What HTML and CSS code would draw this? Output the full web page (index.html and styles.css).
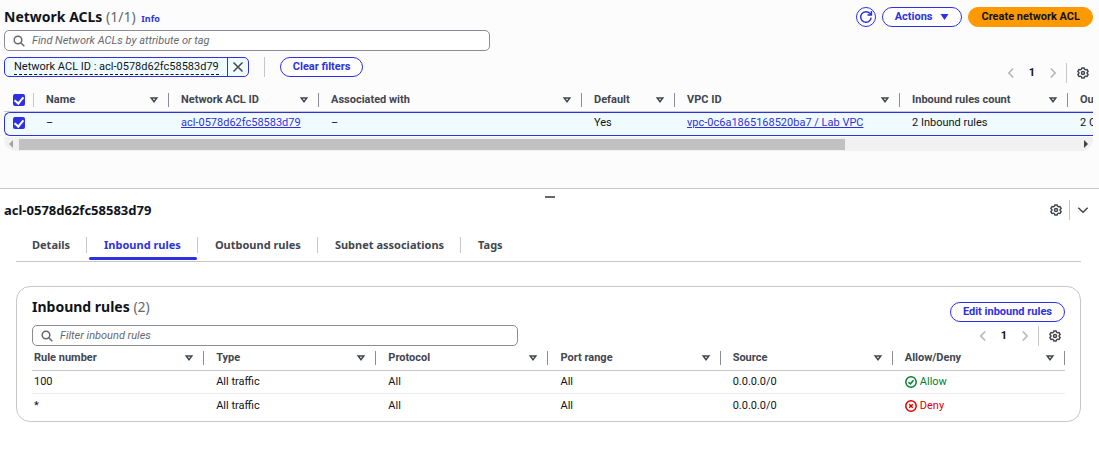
FILE: index.html
```
<!DOCTYPE html>
<html lang="en">
<head>
<meta charset="utf-8">
<title>Network ACLs</title>
<link rel="stylesheet" href="styles.css">
</head>
<body>
<svg class="sprite" aria-hidden="true">
  <symbol id="search" viewBox="0 0 12 12"><circle cx="5" cy="5" r="3.8"/><path d="M7.8 7.8 11.3 11.3"/></symbol>
  <symbol id="sort" viewBox="0 0 10 8"><path d="M2.200 2h5.600L5 5.800z"/></symbol>
  <symbol id="left" viewBox="0 0 12 12"><path d="M8.2 1.5 3.8 6l4.4 4.5"/></symbol>
  <symbol id="right" viewBox="0 0 12 12"><path d="M3.8 1.5 8.2 6l-4.4 4.5"/></symbol>
  <symbol id="gear" viewBox="0 0 12 12"><path d="M4.900 1h2.200l.5 1.300 1 .5 1.400-.3 1.100 2-.9 1v1l.9 1-1.100 2-1.400-.3-1 .5L7.100 11H4.900l-.5-1.300-1-.5-1.400.3-1.100-2 .9-1v-1l-.9-1 1.100-2 1.400.3 1-.5z"/><circle cx="6" cy="6" r="1.500"/></symbol>
</svg>

<main class="list">
  <header class="head">
    <h1 class="title">Network ACLs <span class="count">(1/1)</span> <a class="info" href="#info">Info</a></h1>
    <div class="actions">
      <button class="btn round" aria-label="Refresh"><svg class="refresh" viewBox="0 0 14 14"><path d="M12.200 7.700A5.300 5.300 0 1 1 11 3.500l1.300 1.300M12.400 1v4H8.500"/></svg></button>
      <button class="btn">Actions <svg class="caret" viewBox="0 0 9 8"><path d="M.5 1h8l-4 6z"/></svg></button>
      <button class="btn primary">Create network ACL</button>
    </div>
  </header>
  <div class="toolbar">
    <div class="filters">
      <label class="search"><svg class="icon12"><use href="#search"/></svg><input type="text" aria-label="Find Network ACLs" placeholder="Find Network ACLs by attribute or tag"></label>
      <div class="tokens">
        <div class="token"><button class="token-text"><span>Network ACL ID : acl-0578d62fc58583d79</span></button><button class="token-x" aria-label="Remove filter"><svg class="icon12" viewBox="0 0 12 12"><path d="M1.500 1.500l9 9M10.500 1.500l-9 9"/></svg></button></div>
        <span class="rule"></span>
        <button class="btn">Clear filters</button>
      </div>
    </div>
    <nav class="pager" aria-label="Network ACL pages">
      <button class="ghost dim" aria-label="Previous page"><svg class="icon12"><use href="#left"/></svg></button>
      <button class="ghost page">1</button>
      <button class="ghost dim" aria-label="Next page"><svg class="icon12"><use href="#right"/></svg></button>
      <span class="rule"></span>
      <button class="ghost" aria-label="Preferences"><svg class="icon12"><use href="#gear"/></svg></button>
    </nav>
  </div>
  <div class="scroller">
    <table class="acls">
      <colgroup><col class="c-check"><col class="c-name"><col class="c-id"><col class="c-assoc"><col class="c-default"><col class="c-vpc"><col class="c-in"><col class="c-out"></colgroup>
      <thead><tr>
        <th><div class="cell light"><input class="check" type="checkbox" checked aria-label="Select all"></div></th>
        <th><div class="cell">Name<svg class="sort"><use href="#sort"/></svg></div></th>
        <th><div class="cell">Network ACL ID<svg class="sort"><use href="#sort"/></svg></div></th>
        <th><div class="cell">Associated with<svg class="sort"><use href="#sort"/></svg></div></th>
        <th><div class="cell">Default<svg class="sort"><use href="#sort"/></svg></div></th>
        <th><div class="cell">VPC ID<svg class="sort"><use href="#sort"/></svg></div></th>
        <th><div class="cell">Inbound rules count<svg class="sort"><use href="#sort"/></svg></div></th>
        <th><div class="cell">Outbound rules count</div></th>
      </tr></thead>
      <tbody><tr>
        <td class="pick"><input class="check" type="checkbox" checked aria-label="Select acl-0578d62fc58583d79"></td>
        <td>–</td>
        <td><a href="#acl">acl-0578d62fc58583d79</a></td>
        <td>–</td>
        <td>Yes</td>
        <td><a href="#vpc">vpc-0c6a1865168520ba7 / Lab VPC</a></td>
        <td>2 Inbound rules</td>
        <td>2 Outbound rules</td>
      </tr></tbody>
    </table>
  </div>
  <div class="scrollbar" aria-hidden="true">
    <svg class="arrow off" viewBox="0 0 6 8"><path d="M5 0v8L1 4z"/></svg>
    <div class="track"><div class="thumb"></div></div>
    <svg class="arrow" viewBox="0 0 6 8"><path d="M1 0v8l4-4z"/></svg>
  </div>
</main>

<section class="panel">
  <div class="grip"></div>
  <header class="panel-head">
    <h2 class="panel-title">acl-0578d62fc58583d79</h2>
    <div class="panel-tools">
      <button class="ghost" aria-label="Panel preferences"><svg class="icon12"><use href="#gear"/></svg></button>
      <span class="rule"></span>
      <button class="ghost" aria-label="Collapse panel"><svg class="icon12" viewBox="0 0 12 12"><path d="M1.300 3.800 6 8.300l4.700-4.500"/></svg></button>
    </div>
  </header>
  <div class="tabs" role="tablist">
    <button class="tab" role="tab"><span>Details</span></button>
    <button class="tab active" role="tab" aria-selected="true"><span>Inbound rules</span></button>
    <button class="tab" role="tab"><span>Outbound rules</span></button>
    <button class="tab" role="tab"><span>Subnet associations</span></button>
    <button class="tab" role="tab"><span>Tags</span></button>
  </div>
  <div class="card">
    <header class="card-head">
      <h2 class="title">Inbound rules <span class="count">(2)</span></h2>
      <button class="btn">Edit inbound rules</button>
    </header>
    <div class="card-bar">
      <label class="search"><svg class="icon12"><use href="#search"/></svg><input type="text" aria-label="Filter inbound rules" placeholder="Filter inbound rules"></label>
      <nav class="pager" aria-label="Rule pages">
        <button class="ghost dim" aria-label="Previous page"><svg class="icon12"><use href="#left"/></svg></button>
        <button class="ghost page">1</button>
        <button class="ghost dim" aria-label="Next page"><svg class="icon12"><use href="#right"/></svg></button>
        <span class="rule"></span>
        <button class="ghost" aria-label="Preferences"><svg class="icon12"><use href="#gear"/></svg></button>
      </nav>
    </div>
    <table class="rules">
      <thead><tr>
        <th><div class="cell">Rule number<svg class="sort"><use href="#sort"/></svg></div></th>
        <th><div class="cell">Type<svg class="sort"><use href="#sort"/></svg></div></th>
        <th><div class="cell">Protocol<svg class="sort"><use href="#sort"/></svg></div></th>
        <th><div class="cell">Port range<svg class="sort"><use href="#sort"/></svg></div></th>
        <th><div class="cell">Source<svg class="sort"><use href="#sort"/></svg></div></th>
        <th><div class="cell">Allow/Deny<svg class="sort"><use href="#sort"/></svg></div></th>
      </tr></thead>
      <tbody>
        <tr><td>100</td><td>All traffic</td><td>All</td><td>All</td><td>0.0.0.0/0</td><td><span class="status allow"><svg class="icon12" viewBox="0 0 12 12"><circle cx="6" cy="6" r="5.200"/><path d="M3.500 6.200l1.800 1.700 3.200-3.600"/></svg>Allow</span></td></tr>
        <tr><td>*</td><td>All traffic</td><td>All</td><td>All</td><td>0.0.0.0/0</td><td><span class="status deny"><svg class="icon12" viewBox="0 0 12 12"><circle cx="6" cy="6" r="5.200"/><path d="M4.200 4.200l3.600 3.600M7.800 4.200L4.200 7.800"/></svg>Deny</span></td></tr>
      </tbody>
    </table>
  </div>
</section>
</body>
</html>
```
FILE: styles.css
```
:root {
  --blue: #2d31e3;
  --ink: #0f141a;
  --head: #424650;
  --line: #c6c6cd;
  --edge: #8c8c94;
  --display: "Noto Sans", "Open Sans", sans-serif;
}
* { box-sizing: border-box; }
body {
  margin: 0;
  min-height: 100vh;
  display: flex;
  flex-direction: column;
  background: #fff;
  color: var(--ink);
  font: 11px/16px Roboto, "Noto Sans", sans-serif;
}
button, input { font: inherit; color: inherit; margin: 0; padding: 0; }
button { background: none; border: 0; white-space: nowrap; }
svg { flex: none; fill: none; stroke: currentColor; stroke-width: 1.5; }
a { color: var(--blue); }
h1, h2 { margin: 0; }
.sprite { position: absolute; width: 0; height: 0; }
.icon12 { width: 12px; height: 12px; }
.sort { width: 10px; height: 8px; }

.list { background: #fcfcfc; padding: 7px 6px 37px 4px; }
.head, .toolbar, .card-head, .card-bar, .panel-head { display: flex; justify-content: space-between; }
.head { height: 23px; }
.title { font: 700 14px/20px var(--display); }
.count { color: #656871; font-weight: 400; }
.info { font-size: 9px; text-decoration: none; margin-left: 2px; }
.actions { display: flex; gap: 6px; }
.btn {
  height: 20px;
  padding: 0 12px;
  display: inline-flex;
  align-items: center;
  gap: 8px;
  border: 1px solid var(--blue);
  border-radius: 10px;
  background: #fff;
  color: var(--blue);
  font-weight: 700;
}
.round { width: 20px; padding: 0; justify-content: center; }
.refresh { width: 14px; height: 14px; }
.caret { width: 9px; height: 8px; fill: currentColor; stroke: none; }
.primary { background: #ff9900; border-color: #ff9900; color: var(--ink); }

.toolbar { margin-bottom: 6px; align-items: flex-end; }
.filters { flex: 1; padding-bottom: 6px; }
.search {
  width: 486px;
  height: 21px;
  padding: 0 8px;
  display: flex;
  align-items: center;
  gap: 7px;
  border: 1px solid var(--edge);
  border-radius: 5px;
  background: #fff;
  color: #656871;
}
.search input { flex: 1; border: 0; outline: 0; background: none; }
.search input::placeholder { color: #656871; font-style: italic; opacity: 1; }
.tokens { display: flex; gap: 15px; margin-top: 6px; }
.token { display: flex; height: 20px; border: 1px solid var(--blue); border-radius: 5px; background: #f0fbff; }
.token-text { padding: 0 8px 0 9px; }
.token-text span { display: block; line-height: 14px; border-bottom: 1px dashed var(--ink); }
.token-x { width: 21px; display: flex; align-items: center; justify-content: center; border-left: 1px solid var(--blue); color: var(--head); }
.rule { width: 1px; height: 20px; background: var(--line); }
.pager { display: flex; align-items: center; gap: 10px; padding-right: 4px; }
.pager .rule { margin-left: -3px; }
.ghost { display: flex; align-items: center; justify-content: center; color: var(--head); }
.dim { color: #b4b4bb; }
.page { width: 10px; color: var(--ink); font-weight: 700; }

.scroller { overflow: hidden; }
table { border-collapse: separate; border-spacing: 0; table-layout: fixed; }
th, td { padding: 0; text-align: left; white-space: nowrap; overflow: hidden; }
th { color: var(--head); font-weight: 700; border-bottom: 1px solid var(--line); }
.cell { display: flex; align-items: center; justify-content: space-between; height: 14px; padding-right: 9px; border-right: 1px solid var(--edge); }
.acls { width: 1414px; }
.acls th { height: 23px; }
.acls th + th, .acls td + td { padding-left: 12px; }
.acls td { height: 24px; padding-bottom: 2px; background: #f0fbff; border: solid var(--blue); border-width: 1px 0; }
.acls td:first-child { border-left-width: 1px; border-radius: 6px 0 0 6px; }
.light { border-color: var(--line); padding-left: 9px; }
.pick { padding-left: 8px; }
.c-check { width: 30px; }
.c-name { width: 135px; }
.c-id { width: 150px; }
.c-assoc { width: 263px; }
.c-default { width: 93px; }
.c-vpc { width: 225px; }
.c-in { width: 168px; }
.check {
  appearance: none;
  display: grid;
  place-items: center;
  flex: none;
  width: 12px;
  height: 12px;
  border-radius: 2px;
  background: var(--blue);
}
.check::before {
  content: "";
  width: 4px;
  height: 7px;
  margin-bottom: 2px;
  border: solid #fff;
  border-width: 0 2px 2px 0;
  transform: rotate(40deg);
}
.scrollbar { display: flex; align-items: center; gap: 5px; height: 14px; margin-top: 1px; padding: 0 4px; background: #f1f1f1; border-radius: 0 0 12px 12px; }
.track { flex: 1; }
.thumb { width: 78%; height: 11px; background: #c1c1c1; }
.arrow { width: 6px; height: 8px; fill: #424242; stroke: none; }
.off { fill: #a3a3a3; }

.panel { flex: 1; border-top: 1px solid var(--line); padding: 7px 0 36px; }
.grip { width: 10px; height: 2px; margin: 0 auto; background: #656871; }
.panel-head { align-items: center; height: 24px; padding: 0 10px 0 4px; }
.panel-title { font: 700 13px/20px var(--display); }
.panel-tools { display: flex; align-items: center; gap: 7px; }
.tabs { display: flex; height: 40px; margin: 0 18px 24px 16px; padding-top: 8px; border-bottom: 1px solid var(--line); }
.tab { position: relative; color: var(--head); font: 700 11px/16px var(--display); display: flex; align-items: center; height: 31px; padding-bottom: 1px; }
.tab span { padding: 0 16px; }
.tab + .tab span { border-left: 1px solid var(--line); padding-left: 17px; }
.active { color: var(--blue); }
.active::after { content: ""; position: absolute; left: 3px; right: 0; bottom: 1px; height: 3px; border-radius: 2px; background: var(--blue); }
.card { margin: 0 18px 0 16px; padding: 10px 15px 4px; border: 1px solid var(--line); border-radius: 14px; }
.card-head { height: 28px; }
.card-head .btn { margin-top: 5px; }
.card-bar { align-items: center; }
.rules { width: 100%; }
.rules th { height: 25px; }
.rules th + th, .rules td + td { padding-left: 12px; }
.rules th:first-child, .rules td:first-child { padding-left: 2px; }
.rules td { height: 23px; }
.rules tr:first-child td { border-bottom: 1px solid #ebebf0; }
.status { display: flex; align-items: center; gap: 3px; }
.allow { color: #00802f; }
.deny { color: #db0000; }
```
